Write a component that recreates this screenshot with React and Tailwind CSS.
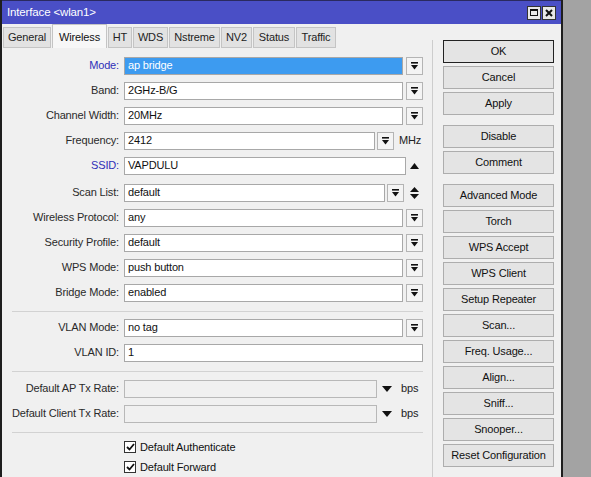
import React from "react";

const FONT = { fontFamily: '"Liberation Sans", Arial, sans-serif' };

const tabs = [
  { name: "General", w: "w-[48px]" },
  { name: "Wireless", w: "w-[55px]", active: true },
  { name: "HT", w: "w-[24px]" },
  { name: "WDS", w: "w-[35px]" },
  { name: "Nstreme", w: "w-[51px]" },
  { name: "NV2", w: "w-[31px]" },
  { name: "Status", w: "w-[42px]" },
  { name: "Traffic", w: "w-[40px]" },
];

function DropBtn() {
  return (
    <div className="ml-[3px] w-[17px] h-[18px] border border-[#b4b4b4] bg-[#f4f4f4] flex items-center justify-center shrink-0">
      <svg width="7" height="8" viewBox="0 0 7 8">
        <rect x="0" y="0" width="7" height="1.6" fill="#111" />
        <polygon points="0,3 7,3 3.5,7.5" fill="#111" />
      </svg>
    </div>
  );
}

function Field({ value, selected, disabled, className = "flex-1" }) {
  let cls = "bg-white border-[#a8a8a8] text-[#111]";
  if (selected) cls = "bg-[#3d9bf0] border-[#a8a8a8] text-white";
  if (disabled) cls = "bg-[#f0f0f0] border-[#b8b8b8]";
  return (
    <div className={`${className} h-[18px] border ${cls} px-[3px] flex items-center leading-none overflow-hidden whitespace-nowrap`}>
      {value}
    </div>
  );
}

function Row({ label, blue, children }) {
  return (
    <div className="flex items-center h-[25px]">
      <div className={`w-[117px] text-right whitespace-nowrap ${blue ? "text-[#2f2fb8]" : "text-[#2a2a2a]"}`}>
        {label}
      </div>
      <div className="ml-[5px] w-[299px] flex items-center">{children}</div>
    </div>
  );
}

function Sep({ mt, mb }) {
  return <div className={`ml-[10px] w-[411px] h-px bg-[#d2d2d2] ${mt} ${mb}`} />;
}

function Check({ label }) {
  return (
    <div className="flex items-center h-[20px] pl-[122px]">
      <div className="w-[12px] h-[12px] border border-[#333] bg-white flex items-center justify-center">
        <svg width="9" height="8" viewBox="0 0 9 8">
          <path d="M1 4 L3.5 6.5 L8 1" fill="none" stroke="#111" strokeWidth="1.8" />
        </svg>
      </div>
      <span className="ml-[4px] text-[#111]">{label}</span>
    </div>
  );
}

const btnGroups = [
  ["OK", "Cancel", "Apply"],
  ["Disable", "Comment"],
  [
    "Advanced Mode",
    "Torch",
    "WPS Accept",
    "WPS Client",
    "Setup Repeater",
    "Scan...",
    "Freq. Usage...",
    "Align...",
    "Sniff...",
    "Snooper...",
    "Reset Configuration",
  ],
];

export default function App() {
  return (
    <div className="w-[591px] h-[477px] bg-[#a3a3a3] overflow-hidden text-[11px] tracking-[-0.15px]" style={FONT}>
      <div className="w-[563px] h-[477px] bg-[#f0f0f0] border-l-2 border-r-2 border-[#1e1e1e] flex flex-col">
        {/* title bar */}
        <div className="h-[24px] shrink-0 bg-[#4a4fc6] border-t border-[#2a2a60] flex items-center justify-between pl-[5px] pr-[5px]">
          <span className="text-white text-[11.5px]">Interface &lt;wlan1&gt;</span>
          <div className="flex gap-[1px]">
            <div className="w-[14px] h-[14px] bg-[#e8e8e8] border border-[#333] flex items-center justify-center">
              <div className="w-[8px] h-[7px] border border-[#111] border-t-2" />
            </div>
            <div className="w-[14px] h-[14px] bg-[#e8e8e8] border border-[#333] flex items-center justify-center">
              <svg width="8" height="8" viewBox="0 0 8 8">
                <path d="M1 1 L7 7 M7 1 L1 7" stroke="#111" strokeWidth="2" />
              </svg>
            </div>
          </div>
        </div>

        <div className="flex flex-1">
          {/* left pane */}
          <div className="w-[430px] shrink-0">
            <div className="flex items-end h-[24px] pl-[1px] gap-[1px]">
              {tabs.map((t) =>
                t.active ? (
                  <div key={t.name} className={`${t.w} h-[24px] bg-[#f7f7f7] border border-b-0 border-[#c4c4c4] flex items-start justify-center pt-[4px] text-[#111]`}>
                    {t.name}
                  </div>
                ) : (
                  <div key={t.name} className={`${t.w} h-[21px] bg-[#e2e2e2] border border-[#c4c4c4] flex items-center justify-center text-[#222]`}>
                    {t.name}
                  </div>
                )
              )}
            </div>

            <div className="pt-[5px]">
              <Row label="Mode:" blue>
                <Field value="ap bridge" selected />
                <DropBtn />
              </Row>
              <Row label="Band:">
                <Field value="2GHz-B/G" />
                <DropBtn />
              </Row>
              <Row label="Channel Width:">
                <Field value="20MHz" />
                <DropBtn />
              </Row>
              <Row label="Frequency:">
                <Field value="2412" />
                <div className="-ml-[1px]">
                  <DropBtn />
                </div>
                <span className="ml-[5px] w-[24px] text-[#222]">MHz</span>
              </Row>
              <Row label="SSID:" blue>
                <Field value="VAPDULU" className="w-[282px]" />
                <div className="flex-1 flex justify-center">
                  <svg width="9" height="6" viewBox="0 0 9 6">
                    <polygon points="0,6 9,6 4.5,0" fill="#111" />
                  </svg>
                </div>
              </Row>
              <div className="h-[2px]" />
              <Row label="Scan List:">
                <Field value="default" />
                <div className="-ml-[1px]">
                  <DropBtn />
                </div>
                <div className="ml-[2px] w-[17px] flex justify-center">
                  <svg width="9" height="12" viewBox="0 0 9 12">
                    <polygon points="0,5 9,5 4.5,0" fill="#111" />
                    <polygon points="0,7 9,7 4.5,12" fill="#111" />
                  </svg>
                </div>
              </Row>
              <Row label="Wireless Protocol:">
                <Field value="any" />
                <DropBtn />
              </Row>
              <Row label="Security Profile:">
                <Field value="default" />
                <DropBtn />
              </Row>
              <Row label="WPS Mode:">
                <Field value="push button" />
                <DropBtn />
              </Row>
              <Row label="Bridge Mode:">
                <Field value="enabled" />
                <DropBtn />
              </Row>

              <Sep mt="mt-[6px]" mb="mb-[3px]" />

              <Row label="VLAN Mode:">
                <Field value="no tag" />
                <DropBtn />
              </Row>
              <Row label="VLAN ID:">
                <Field value="1" />
              </Row>

              <Sep mt="mt-[6px]" mb="mb-[4px]" />

              <Row label="Default AP Tx Rate:">
                <Field value="" disabled />
                <div className="w-[20px] flex justify-center">
                  <svg width="10" height="6" viewBox="0 0 10 6">
                    <polygon points="0,0 10,0 5,6" fill="#111" />
                  </svg>
                </div>
                <span className="w-[26px] pl-[4px] text-[#222]">bps</span>
              </Row>
              <Row label="Default Client Tx Rate:">
                <Field value="" disabled />
                <div className="w-[20px] flex justify-center">
                  <svg width="10" height="6" viewBox="0 0 10 6">
                    <polygon points="0,0 10,0 5,6" fill="#111" />
                  </svg>
                </div>
                <span className="w-[26px] pl-[4px] text-[#222]">bps</span>
              </Row>

              <Sep mt="mt-[6px]" mb="mb-[4px]" />

              <Check label="Default Authenticate" />
              <Check label="Default Forward" />
            </div>
          </div>

          {/* right pane */}
          <div className="mt-[16px] flex-1 border-l border-[#cdcdcd] pl-[10px] pr-[7px] flex flex-col gap-[10px]">
            {btnGroups.map((g, gi) => (
              <div key={gi} className="flex flex-col gap-[3px]">
                {g.map((b) => (
                  <div
                    key={b}
                    className={`h-[23px] w-[111px] flex items-center justify-center bg-[#e4e4e4] text-[#111] whitespace-nowrap border ${
                      b === "OK" ? "border-[#222]" : "border-[#adadad]"
                    }`}
                  >
                    {b}
                  </div>
                ))}
              </div>
            ))}
          </div>
        </div>
      </div>
    </div>
  );
}
